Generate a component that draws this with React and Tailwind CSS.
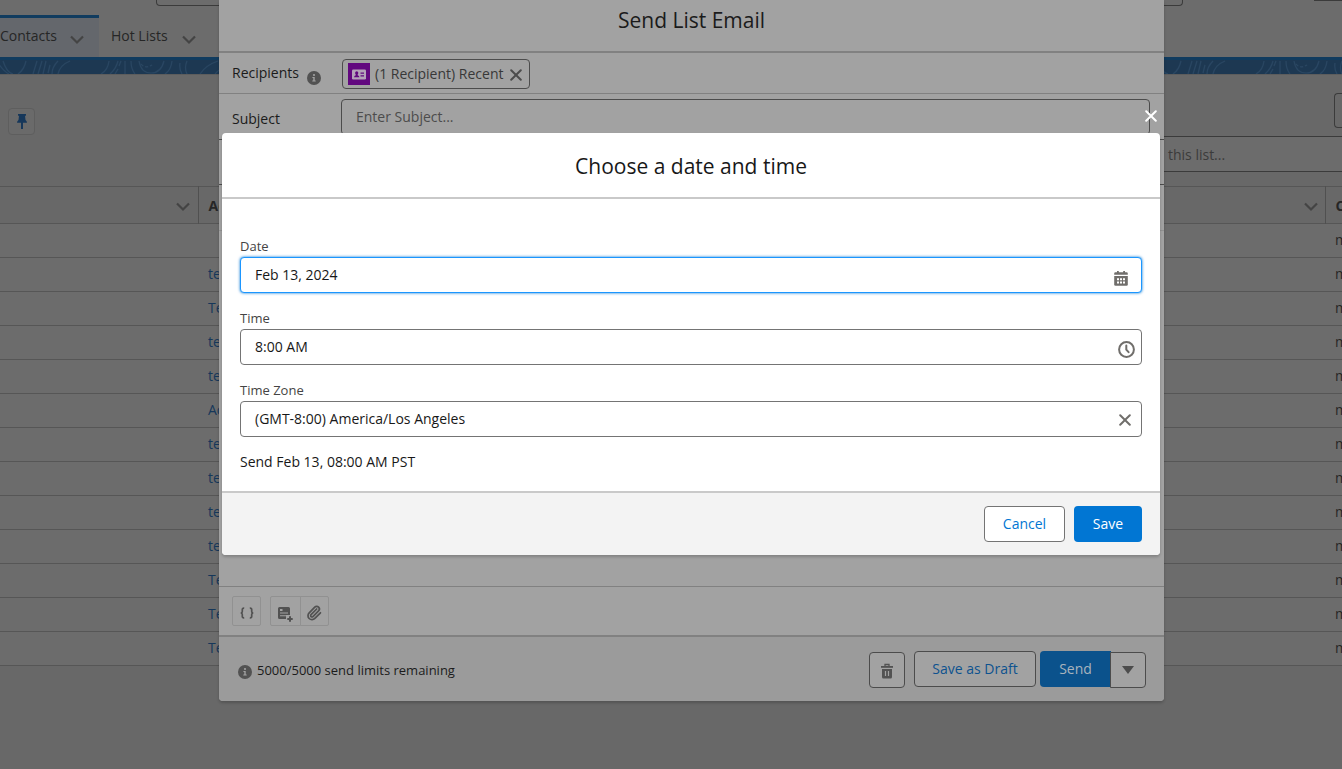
import React from "react";
import { Paperclip } from "lucide-react";

const ROWS = ["", "test", "Test", "test", "test", "Acme", "test", "test", "test", "test", "Test", "Test", "Test"];

function Chevron({ className }) {
  return (
    <svg viewBox="0 0 14 10" className={className} fill="none" stroke="currentColor" strokeWidth="2.2" aria-hidden="true">
      <path d="M1 1.5 7 7.5 13 1.5" />
    </svg>
  );
}

function Cross({ className }) {
  return (
    <svg viewBox="0 0 12 12" className={className} fill="none" stroke="currentColor" strokeWidth="2" strokeLinecap="round" aria-hidden="true">
      <path d="M1.2 1.2 10.8 10.8M10.8 1.2 1.2 10.8" />
    </svg>
  );
}

function Info({ className }) {
  return (
    <svg viewBox="0 0 14 14" className={className} aria-hidden="true">
      <circle cx="7" cy="7" r="7" fill="#525252" />
      <circle cx="7" cy="4" r="1.1" fill="#a2a2a2" />
      <path d="M5.4 6.1h2.3v3.4h1v1H5.3v-1h1V7h-.9z" fill="#a2a2a2" />
    </svg>
  );
}

function Trash() {
  return (
    <svg viewBox="0 0 14 16" className="mt-0.5 h-4 w-3.5" fill="none" aria-hidden="true">
      <path d="M5 3V1.5h4V3" stroke="#525252" strokeWidth="1.3" />
      <path d="M1 3h12v1.8H1z" fill="#525252" />
      <path d="M2 6h10v8q0 1.5-1.5 1.5h-7Q2 15.5 2 14z" fill="#525252" />
      <path d="M5.5 8v5M8.5 8v5" stroke="#a2a2a2" strokeWidth="1.2" />
    </svg>
  );
}

function Calendar() {
  return (
    <svg viewBox="0 0 14 15" className="h-[15px] w-3.5" aria-hidden="true">
      <path d="M3 0h1.8v1.3h4.4V0H11v1.3h1.5q1.3 0 1.3 1.3v1.2H.2V2.6q0-1.3 1.3-1.3H3z" fill="#706e6b" />
      <path d="M.2 5h13.6v8.5q0 1.3-1.3 1.3h-11Q.2 14.8.2 13.5z" fill="#706e6b" />
      <path d="M3 7.2h2v2H3zM6 7.2h2v2H6zM9 7.2h2v2H9zM3 10.4h2v2H3zM6 10.4h2v2H6zM9 10.4h2v2H9z" fill="#fff" />
    </svg>
  );
}

function Clock() {
  return (
    <svg viewBox="0 0 17 17" className="size-[17px]" fill="none" stroke="#706e6b" aria-hidden="true">
      <circle cx="8.5" cy="8.5" r="7.4" strokeWidth="2" />
      <path d="M8.300 4.600v4l2.300 2.600" strokeWidth="2" strokeLinecap="round" />
    </svg>
  );
}

function Band() {
  return (
    <svg className="block h-3.5 w-full bg-[#1d3852]" aria-hidden="true">
      <defs>
        <pattern id="contours" width="385" height="14" patternUnits="userSpaceOnUse">
          <g fill="none" stroke="#294662" strokeWidth="1.2">
            <path d="M-2 3Q4 12 9 14M3 1q4 12 10 13M26 1q-2 9-8 13M37 1l-4 13M42 1l-4 13M46 1l-3 13M50 5l-2 8M58 1q-6 6-6 13M70 1q-10 4-12 13" />
            <path d="M109 1q-1 9-8 13M118 1q-2 8-8 13M121 1l-2 5M118 9l-3 5M125 1v13M131 1q0 8 4 13M139 1q2 12 12 12T164 1M172 1q-1 9-7 13" />
            <path d="M141 4q4 5 11 1" strokeDasharray="3 2" />
            <path d="M180 3q-1 6 2 11M187 1q-3 7 0 13M218 1q-12 4-18 13M224 8q-6 2-9 6" />
            <path d="M240 1q4 12 14 12T270 1M285 1q-3 8-8 13M292 1l-5 13M330 1q-10 4-12 13M350 1q3 9 10 13" />
          </g>
        </pattern>
      </defs>
      <rect width="100%" height="14" fill="url(#contours)" />
    </svg>
  );
}

function ListPage() {
  return (
    <div className="min-h-screen overflow-hidden bg-[#686868] text-[#262626]">
      <header className="bg-[#6c6c6c]">
        <div className="flex h-[15px] items-start justify-between pl-[156px]">
          <div className="h-1.5 w-[1027px] rounded-b border-x border-b border-[#3b3b3b]" />
          <div className="h-px w-7 bg-[#3b3b3b]" />
        </div>
        <nav className="flex h-[42px] text-sm">
          <div className="flex w-[99px] items-center justify-between border-t-3 border-[#113c5f] bg-[#64676c] pr-[15px] pb-1">
            <a href="#contacts">Contacts</a>
            <Chevron className="mt-2 h-2.5 w-3.5 text-[#444]" />
          </div>
          <div className="flex items-center gap-3.5 border-t-3 border-transparent pb-1 pl-3">
            <a href="#hot-lists">Hot Lists</a>
            <Chevron className="mt-2 h-2.5 w-3.5 text-[#444]" />
          </div>
        </nav>
        <div className="h-[3px] bg-[#113c5f]" />
        <Band />
      </header>
      <section className="flex h-28 items-start justify-between border-t border-[#5d5d5d] pl-2">
        <button type="button" aria-label="Pin this list" className="mt-[33px] flex size-[27px] items-center justify-center rounded border border-[#5e5e5e] bg-[#6a6a6a]">
          <svg viewBox="0 0 10 15" className="h-[15px] w-2.5" fill="#16375a" aria-hidden="true">
            <path d="M1 0h8v1.800H8L8.500 6Q10 7.200 10 8.800H6V15H4V8.800H0Q0 7.200 1.500 6L2 1.800H1z" />
          </svg>
        </button>
        <div className="flex w-[300px] flex-col items-end pt-[18px]">
          <div className="h-[35px] w-2 rounded-l border-y border-l border-[#3b3b3b]" />
          <input
            aria-label="Search this list"
            placeholder="Search this list..."
            className="mt-2 h-9 w-full border-y border-[#3b3b3b] bg-[#6c6c6c] pl-[78px] text-sm placeholder:text-[#3b3b3b]"
          />
        </div>
      </section>
      <table className="w-full table-fixed border-collapse text-left text-sm">
        <colgroup>
          <col className="w-[198px]" />
          <col />
          <col className="w-[17px]" />
        </colgroup>
        <thead>
          <tr className="h-[37px] border-y border-[#565656]">
            <th className="pt-1 pr-2"><Chevron className="ml-auto h-2.5 w-3.5 text-[#444]" /></th>
            <th className="border-x border-[#505050] pt-0.5 pr-[7px] pl-2.5">
              <div className="flex items-center justify-between">
                Account
                <Chevron className="mt-0.5 h-2.5 w-3.5 text-[#444]" />
              </div>
            </th>
            <th className="overflow-hidden pt-0.5 pl-2.5">C</th>
          </tr>
        </thead>
        <tbody className="bg-[#6c6c6c]">
          {ROWS.map((name, i) => (
            <tr key={i} className="h-[34px] border-b border-[#565656]">
              <td />
              <td className="pb-0.5 pl-2.5"><a href="#account" className="text-[#16375a]">{name}</a></td>
              <td className="overflow-hidden pb-0.5 pl-2.5">m</td>
            </tr>
          ))}
        </tbody>
      </table>
    </div>
  );
}

function EmailDialog() {
  return (
    <div className="absolute inset-0 pr-[178px] pl-[219px]">
      <section aria-label="Send List Email" className="overflow-hidden rounded-b bg-[#a2a2a2] text-sm text-[#1b1b1b] shadow-[0_2px_3px_rgba(0,0,0,0.2)]">
        <h2 className="h-[53px] border-b-2 border-[#818181] pt-1.5 text-center text-[21px] leading-7">Send List Email</h2>
        <div className="flex h-[41px] items-center border-b border-[#818181] pl-[13px]">
          <div className="flex w-[110px] items-center gap-2">
            <span>Recipients</span>
            <Info className="mt-2.5 size-3.5" />
          </div>
          <div className="mt-0.5 flex h-[30px] items-center rounded border border-[#4c4c4c] pr-[7px] pl-[5px] text-[#383838]">
            <svg viewBox="0 0 22 22" className="mr-[5px] size-[22px]" aria-hidden="true">
              <path d="M0 0h22v22H0z" fill="#62087f" />
              <rect x="4" y="6.500" width="14" height="10" rx="1.300" fill="#b3a2b8" />
              <path d="M6 14.300q0-1.500 2-2.200-.9-.9-.9-2.300Q7.200 8.200 8.700 8.200t1.600 1.600q0 1.400-.9 2.300 2 .7 2 2.200zM12.500 9.500H16v1.200h-3.500zM12.500 12.300H16v1.200h-3.500z" fill="#62087f" />
            </svg>
            <span>(1 Recipient) Recent</span>
            <button type="button" aria-label="Remove recipient" className="mt-0.5 ml-[7px]"><Cross className="size-3 text-[#4c4c4c]" /></button>
          </div>
        </div>
        <div className="flex h-[46px] items-start border-b border-[#4c4c4c] pt-[5px] pr-3.5 pl-[13px]">
          <label htmlFor="subject" className="w-[109px] pt-2.5">Subject</label>
          <input id="subject" placeholder="Enter Subject..." className="h-9 flex-1 rounded border border-[#4c4c4c] px-3.5 pb-0.5 placeholder:text-[#4c4c4c]" />
        </div>
        <div className="h-[45px] border-b border-[#4c4c4c]" />
        <div className="h-[46px] border-b border-[#919191]" />
        <div className="h-[356px] border-b border-[#818181]" />
        <div className="flex h-[50px] items-center border-b-2 border-[#818181] pl-[13px] text-[#525252]">
          <button type="button" aria-label="Insert merge field" className="mr-[9px] flex h-[30px] w-[29px] items-center justify-center rounded-xs border border-[#919191]">
            <svg viewBox="0 0 14 12" className="mt-1 h-3 w-3.5" fill="none" stroke="currentColor" strokeWidth="1.700" aria-hidden="true">
              <path d="M4.200 1.200Q2.300 1 2.300 2.600v1.800Q2.300 5.800.8 6q1.500.2 1.500 1.600v1.800Q2.300 11 4.200 10.800M9.800 1.200q1.900-.2 1.900 1.400v1.800q0 1.400 1.500 1.600-1.500.2-1.500 1.600v1.800q0 1.600-1.900 1.400" />
            </svg>
          </button>
          <button type="button" aria-label="Insert template" className="flex h-[30px] w-[31px] items-center justify-center rounded-l-xs border border-[#919191]">
            <svg viewBox="0 0 15 15" className="mt-1.5 size-[15px]" aria-hidden="true">
              <path d="M1.500 0h9Q12 0 12 1.500V8H8v4H1.500Q0 12 0 10.500v-9Q0 0 1.500 0z" fill="currentColor" />
              <path d="M2 2h2.500v2H2zM2 5.500h8v1H2zM2 8.300h6v1H2z" fill="#a2a2a2" />
              <path d="M12 9.300v5.400M9.300 12h5.400" stroke="currentColor" strokeWidth="2" />
            </svg>
          </button>
          <button type="button" aria-label="Attach file" className="-ml-px flex h-[30px] w-[29px] items-center justify-center rounded-r-xs border border-[#919191]">
            <Paperclip className="mt-1 mr-0.5 size-4" strokeWidth={2.6} />
          </button>
        </div>
        <footer className="flex h-16 items-center justify-between bg-[#9b9b9b] pr-[18px] pl-[19px]">
          <p className="flex items-center gap-[5px] pt-0.5 text-[13px]"><Info className="mt-1 size-3.5" />5000/5000 send limits remaining</p>
          <div className="flex items-end">
            <button type="button" aria-label="Delete" className="mr-[9px] flex size-9 items-center justify-center rounded border border-[#4c4c4c] bg-[#a2a2a2]"><Trash /></button>
            <div className="mb-px flex gap-1">
              <button type="button" className="h-9 w-[122px] rounded border border-[#4c4c4c] bg-[#a2a2a2] text-[#0d528f]">Save as Draft</button>
              <button type="button" className="h-9 w-[71px] rounded-l bg-[#0b528c] text-[#a9b4bd]">Send</button>
            </div>
            <button type="button" aria-label="More send options" className="-ml-px flex size-9 items-center justify-center rounded-r border border-[#4c4c4c] bg-[#a2a2a2]">
              <svg viewBox="0 0 12 8" className="mt-px h-2 w-3" fill="#4c4c4c" aria-hidden="true"><path d="M0 0h12L6 8z" /></svg>
            </button>
          </div>
        </footer>
      </section>
    </div>
  );
}

function Field({ id, label, value, focused, children }) {
  return (
    <div>
      <label htmlFor={id} className="block h-5 text-[13px] leading-[18px] text-[#444]">{label}</label>
      <div className={"flex h-9 items-center justify-between rounded border bg-white pr-1.5 pl-3.5 " + (focused ? "border-[#1b96ff] shadow-[0_0_3px_#0176d3]" : "border-[#747474]")}>
        <input id={id} defaultValue={value} className="min-w-0 flex-1 text-[#181818] outline-none" />
        {children}
      </div>
    </div>
  );
}

function ScheduleDialog() {
  return (
    <div className="absolute inset-0 pt-[133px] pr-[182px] pl-[222px]">
      <section role="dialog" aria-label="Choose a date and time" className="relative rounded bg-white text-sm text-[#181818] shadow-[0_2px_3px_rgba(0,0,0,0.2)]">
        <button type="button" aria-label="Close" className="absolute -top-[23px] right-[3px] text-white"><Cross className="size-3" /></button>
        <h2 className="h-[66px] border-b-2 border-[#c9c9c9] pt-[19px] text-center text-[21px] leading-7">Choose a date and time</h2>
        <div className="flex flex-col gap-4 px-[18px] pt-[38px] pb-5">
          <Field id="date" label="Date" value="Feb 13, 2024" focused>
            <button type="button" aria-label="Pick a date" className="mt-1.5 mr-[7px]"><Calendar /></button>
          </Field>
          <Field id="time" label="Time" value="8:00 AM">
            <button type="button" aria-label="Pick a time" className="mt-1"><Clock /></button>
          </Field>
          <Field id="zone" label="Time Zone" value="(GMT-8:00) America/Los Angeles">
            <button type="button" aria-label="Clear time zone" className="mt-0.5 mr-1"><Cross className="size-3 text-[#706e6b]" /></button>
          </Field>
          <p className="leading-[18px]">Send Feb 13, 08:00 AM PST</p>
        </div>
        <footer className="flex h-16 items-center justify-end gap-[9px] rounded-b border-t-2 border-[#c9c9c9] bg-[#f3f3f3] px-[18px]">
          <button type="button" className="h-9 w-[81px] rounded border border-[#747474] bg-white text-[#0176d3]">Cancel</button>
          <button type="button" className="h-9 w-[68px] rounded bg-[#0176d3] text-white">Save</button>
        </footer>
      </section>
    </div>
  );
}

export default function App() {
  return (
    <main className="relative min-h-screen overflow-hidden font-['Open_Sans','Noto_Sans',sans-serif]">
      <ListPage />
      <EmailDialog />
      <ScheduleDialog />
    </main>
  );
}
